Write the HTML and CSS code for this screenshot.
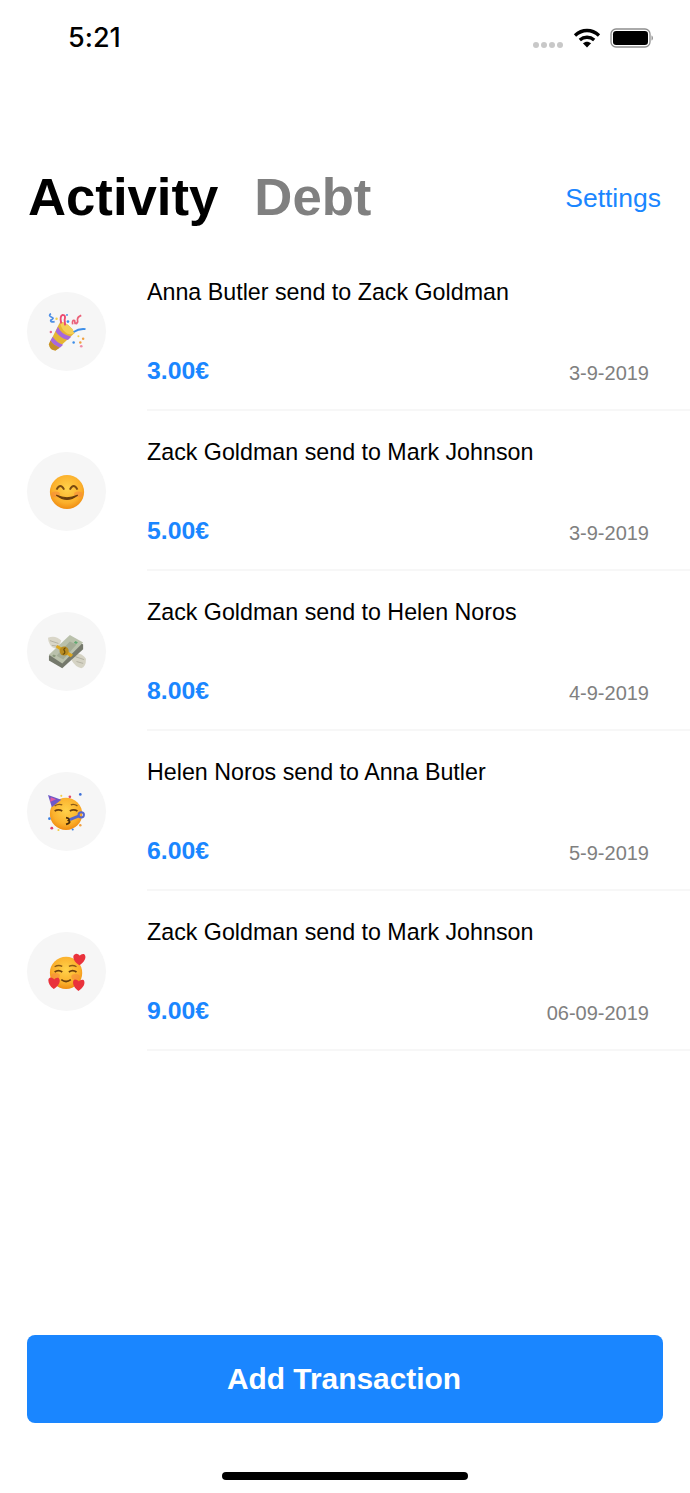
FILE: index.html
```html
<!DOCTYPE html>
<html lang="en">
<head>
<meta charset="utf-8">
<title>Activity</title>
<link rel="stylesheet" href="styles.css">
</head>
<body>
<div class="page">
  <div class="status">
    <span class="time">5:21</span>
    <div class="status-icons">
      <div class="dots"><i></i><i></i><i></i><i></i></div>
      <svg class="wifi" width="28" height="22" viewBox="0 0 28 22"><path d="M2 8.500C9.200 1.800 18.800 1.800 26 8.500" fill="none" stroke="#000" stroke-width="3.300"/><path d="M6.800 13C11 9.300 17 9.300 21.200 13" fill="none" stroke="#000" stroke-width="3.300"/><path d="M9.900 16.200C12.400 14.100 15.600 14.100 18.100 16.200L14 20.500Z" fill="#000"/></svg>
      <svg class="battery" width="46" height="22" viewBox="0 0 46 22"><rect x="1" y="2" width="39" height="18" rx="5" fill="none" stroke="#8e8e8e" stroke-width="1.300"/><rect x="3" y="4" width="35" height="14" rx="3.200" fill="#000"/><path d="M41.500 8.500c1.800.4 2 4.600 0 5z" fill="#8e8e8e"/></svg>
    </div>
  </div>
  <header class="header">
    <h1 class="tab tab-active">Activity</h1>
    <h1 class="tab tab-muted">Debt</h1>
    <a class="settings">Settings</a>
  </header>
  <main class="list">
    <div class="row">
      <div class="avatar">
        <svg class="emoji" viewBox="0 0 40 40">
          <path d="M1 33L13 9Q23 11 28 21L8 39.500Q2 39.500 1 33Z" fill="#e6b534"/>
          <path d="M13 9Q23 11 28 21Q22 24 18 20Q13 16 13 9Z" fill="#f4cf55"/>
          <path d="M10.500 14.500Q14 23 24.500 25L21 28.500Q12 26 8 19.500Z" fill="#a768dc"/>
          <path d="M5 25Q8.500 31 16 33.500L12.500 36.500Q5.500 34 2.500 29Z" fill="#a768dc"/>
          <path d="M1 33L2.500 29Q5.500 34 12.500 36.500L8 39.500Q2 39.500 1 33Z" fill="#c48f28"/>
          <path d="M27 20Q33 16 39.500 17" fill="none" stroke="#3d8ee8" stroke-width="2"/>
          <path d="M14 11Q12 3 15.500 2Q19 2 17.500 7L18 13" fill="none" stroke="#ec4a70" stroke-width="2"/>
          <path d="M26 12Q25 7 28 8L28.500 11Q32 11 31 7Q31 4 35 2.500" fill="none" stroke="#ea6078" stroke-width="1.800"/>
          <path d="M3 0.500Q0 3 4 4.500Q7 5.500 3 7.500Q2 10 7 9" fill="none" stroke="#4e8fe6" stroke-width="1.800"/>
          <circle cx="9" cy="6" r="1.300" fill="#f3d04d"/><circle cx="21" cy="9" r="1.400" fill="#3d8ee8"/><circle cx="20" cy="2" r="1" fill="#3d8ee8"/><circle cx="3" cy="20" r="1.300" fill="#e8658a"/><circle cx="30" cy="11" r="1" fill="#e8658a"/><circle cx="27" cy="31" r="1.300" fill="#3d8ee8"/><circle cx="37" cy="27" r="1.300" fill="#f0a040"/><circle cx="34" cy="31" r="1.300" fill="#f0a040"/><circle cx="35" cy="35" r="1.400" fill="#f08aa8"/><circle cx="32" cy="24.500" r="1.100" fill="#f3d04d"/>
        </svg>
      </div>
      <div class="body">
        <p class="title">Anna Butler send to Zack Goldman</p>
        <div class="meta"><span class="amount">3.00€</span><span class="date">3-9-2019</span></div>
      </div>
    </div>
    <div class="row">
      <div class="avatar">
        <svg class="emoji" viewBox="0 0 40 40">
          <defs><radialGradient id="face" cx="50%" cy="40%" r="60%"><stop offset="0" stop-color="#ffd24a"/><stop offset=".7" stop-color="#fbb02c"/><stop offset="1" stop-color="#ef8c12"/></radialGradient></defs>
          <circle cx="20" cy="20" r="18" fill="url(#face)"/>
          <ellipse cx="8" cy="22.500" rx="4.500" ry="3" fill="#f58a3c" opacity=".6"/><ellipse cx="32" cy="22.500" rx="4.500" ry="3" fill="#f58a3c" opacity=".6"/>
          <path d="M9 17.500Q13 10 17 17.500M23 17.500Q27 10 31 17.500" fill="none" stroke="#7a4a10" stroke-width="2"/>
          <path d="M9 23.500Q20 32 31 23.500Q20 28.500 9 23.500Z" fill="#6b3f0c" stroke="#6b3f0c" stroke-width="1.200" stroke-linejoin="round"/>
        </svg>
      </div>
      <div class="body">
        <p class="title">Zack Goldman send to Mark Johnson</p>
        <div class="meta"><span class="amount">5.00€</span><span class="date">3-9-2019</span></div>
      </div>
    </div>
    <div class="row">
      <div class="avatar">
        <svg class="emoji" viewBox="0 0 40 40">
          <path d="M0 5Q8 2 14 8L11 16Q5 17 2 12Q0 9 0 5Z" fill="#d9d6c8"/>
          <path d="M27 22Q35 20 40 27Q40 36 35 37Q29 36 25 29Z" fill="#d5d3c4"/>
          <path d="M2 8L11 11M4 13L11 14M29 25L38 28M30 30L37 32" stroke="#aeac9c" stroke-width=".9" fill="none"/>
          <path d="M1 24L23 4L37 12L37 17L15 37L1 29Z" fill="#75796c"/>
          <path d="M1 23L23 2L37 10L15 32Z" fill="#bac1ac"/>
          <path d="M9 24L23 9L30 12L16 28Z" fill="#98a28b" opacity=".65"/>
          <path d="M10 12.500L8 15L24 25.500L26.500 23Z" fill="#dca720"/>
          <circle cx="17" cy="19" r="4.800" fill="#b98c20"/>
          <path d="M15.500 22.500Q18.500 22 17.500 19Q15.500 17 18.500 15.500" fill="none" stroke="#5f4508" stroke-width="1.200"/>
          <path d="M29 8.500l2.500 1.400-1.800 1.700-2.500-1.400z" fill="#5fa870"/><path d="M6 22.500l2.500 1.400-1.800 1.700-2.500-1.400z" fill="#8b9a7c"/>
        </svg>
      </div>
      <div class="body">
        <p class="title">Zack Goldman send to Helen Noros</p>
        <div class="meta"><span class="amount">8.00€</span><span class="date">4-9-2019</span></div>
      </div>
    </div>
    <div class="row">
      <div class="avatar">
        <svg class="emoji" viewBox="0 0 40 40">
          <circle cx="19" cy="22" r="17" fill="url(#face)"/>
          <path d="M0 2L14 7L4 15Z" fill="#6d58c8"/><path d="M3 4.500L8.500 6.500L2 9.500Z" fill="#e05aa0"/>
          <path d="M7 13.500Q11 11 15 12.500M24 12.500Q27 11 31 13.500" fill="none" stroke="#8a5a16" stroke-width="1.400"/>
          <path d="M7 19Q11 16.500 15 19M23 19Q27 16.500 31 19" fill="none" stroke="#6b3f0c" stroke-width="1.800"/>
          <path d="M19 26Q24 27 21.500 29Q25 31 19 33" fill="none" stroke="#4a2c08" stroke-width="1.800"/>
          <path d="M23 28L33 24" stroke="#5666cc" stroke-width="3"/>
          <circle cx="35" cy="23" r="2.800" fill="none" stroke="#5666cc" stroke-width="2.200"/>
          <circle cx="23" cy="4" r="1.400" fill="#e04a6a"/><circle cx="34" cy="1.500" r="1.400" fill="#3d70d8"/><circle cx="1.500" cy="27" r="1.400" fill="#3d80e0"/><circle cx="4" cy="37" r="1.500" fill="#e0406a"/><circle cx="11" cy="39" r="1.100" fill="#f3d04d"/><circle cx="26" cy="38.500" r="1.100" fill="#3d80e0"/><circle cx="34" cy="34" r="1.300" fill="#f0a040"/><circle cx="14" cy="3" r="1.100" fill="#f3d04d"/>
        </svg>
      </div>
      <div class="body">
        <p class="title">Helen Noros send to Anna Butler</p>
        <div class="meta"><span class="amount">6.00€</span><span class="date">5-9-2019</span></div>
      </div>
    </div>
    <div class="row">
      <div class="avatar">
        <svg class="emoji" viewBox="0 0 40 40">
          <circle cx="19" cy="21" r="17" fill="url(#face)"/>
          <ellipse cx="8" cy="24" rx="4.500" ry="3" fill="#f58a3c" opacity=".6"/><ellipse cx="29" cy="25" rx="4.500" ry="3" fill="#f58a3c" opacity=".6"/>
          <path d="M7 14.500Q11 12 15 14M22 14Q26 12 30 14.500" fill="none" stroke="#8a5a16" stroke-width="1.400"/>
          <path d="M7 20Q11 17 15 20M22 20Q26 17 30 20" fill="none" stroke="#6b3f0c" stroke-width="1.800"/>
          <path d="M14 28Q19 32 24 28" fill="none" stroke="#6b3f0c" stroke-width="1.800"/>
          <path d="M33 13C26 9 25 2 29 1C31 .5 33 2 33.500 3C34.500 1.500 36.500 .5 38.500 1.500C41 5 38 10 33 13Z" fill="#e9323c"/>
          <path d="M6 38C0 34 -1 27 2 26C4 25.500 6 27 6.500 28C7.500 26.500 9.500 25.500 11.500 26.500C14 30 11 35 6 38Z" fill="#e9323c"/>
          <path d="M32 40C26 36 25 29 28 28C30 27.500 32 29 32.500 30C33.500 28.500 35.500 27.500 37.500 28.500C40 32 37 37 32 40Z" fill="#e9323c"/>
        </svg>
      </div>
      <div class="body">
        <p class="title">Zack Goldman send to Mark Johnson</p>
        <div class="meta"><span class="amount">9.00€</span><span class="date">06-09-2019</span></div>
      </div>
    </div>
  </main>
  <div class="footer">
    <button class="add">Add Transaction</button>
    <div class="home"></div>
  </div>
</div>
</body>
</html>
```
FILE: styles.css
```css
* { box-sizing: border-box; }
html, body { margin: 0; padding: 0; background: #fff; }
body { font-family: "Liberation Sans", Arial, sans-serif; color: #000; }
.page { width: 690px; height: 1493px; display: flex; flex-direction: column; overflow: hidden; }
.status { height: 76px; padding: 22px 35px 0 68px; display: flex; justify-content: space-between; align-items: flex-start; flex-shrink: 0; }
.time { font-family: Inter, "Liberation Sans", sans-serif; font-size: 27px; font-weight: 500; line-height: 32px; font-feature-settings: "calt" 0; }
.status-icons { display: flex; align-items: center; gap: 10px; height: 32px; }
.dots { display: flex; gap: 2px; margin-top: 13px; }
.dots i { width: 6px; height: 6px; border-radius: 50%; background: #c8c8c8; }
.wifi { margin-top: -1px; margin-right: -1px; }
.battery { margin-right: -1px; }
.header { height: 175px; padding: 90px 29px 0 28px; display: flex; align-items: flex-start; flex-shrink: 0; }
.tab { margin: 0; font-size: 52.700px; font-weight: 700; line-height: 62px; }
.tab-active { color: #000; }
.tab-muted { color: #808080; margin-left: 36px; }
.settings { margin-left: auto; margin-top: 16px; font-size: 26.500px; line-height: 32px; color: #1a86ff; }
.list { flex: 1; display: flex; flex-direction: column; }
.row { height: 160px; display: flex; flex-shrink: 0; }
.avatar { width: 79px; height: 79px; margin: 41px 1px 0 27px; border-radius: 50%; background: #f6f6f6; display: flex; align-items: center; justify-content: center; flex-shrink: 0; }
.emoji { width: 38px; height: 38px; display: block; }
.body { flex: 1; margin-left: 40px; padding: 26px 41px 0 0; border-bottom: 2px solid #f7f7f7; display: flex; flex-direction: column; justify-content: flex-start; }
.title { margin: 0; font-size: 23.250px; line-height: 30px; }
.meta { margin-top: 49px; display: flex; justify-content: space-between; align-items: center; height: 30px; }
.amount { font-size: 24.800px; font-weight: 700; color: #1a86ff; }
.date { font-size: 20px; color: #808080; margin-top: 4px; }
.footer { height: 158px; padding: 0 27px; flex-shrink: 0; display: flex; flex-direction: column; align-items: center; }
.add { width: 636px; height: 88px; border: 0; border-radius: 8px; background: #1a86ff; color: #fff; font-family: "Liberation Sans", sans-serif; font-size: 29.900px; font-weight: 700; padding: 0 2px 0 0; }
.home { width: 246px; height: 8px; border-radius: 4px; background: #000; margin-top: 49px; }
```
